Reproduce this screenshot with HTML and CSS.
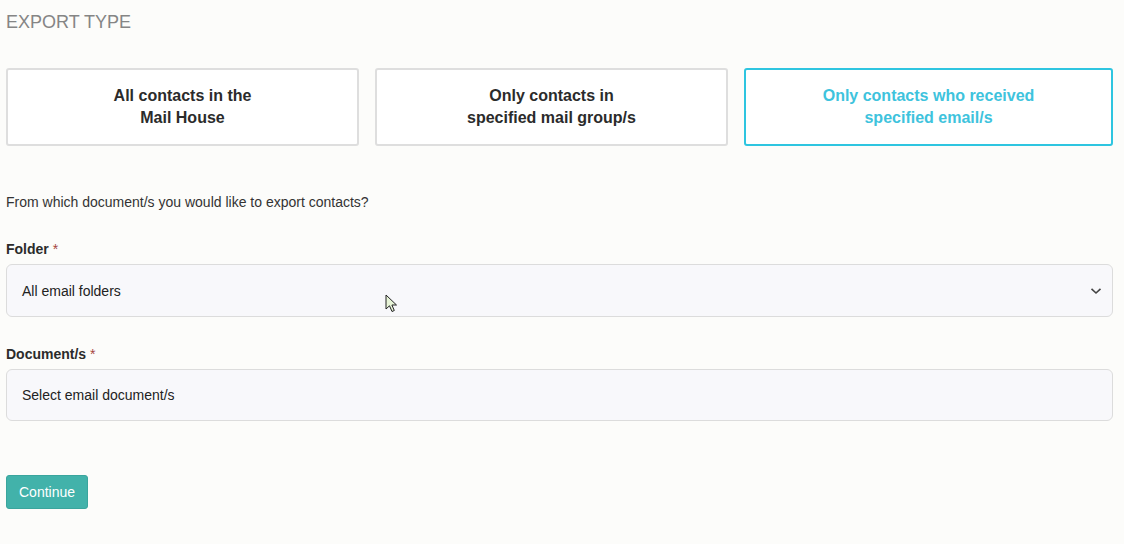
FILE: index.html
```html
<!DOCTYPE html>
<html lang="en">
<head>
    <meta charset="UTF-8">
    <title>Export contacts</title>
    <link rel="stylesheet" href="styles.css">
</head>
<body>
    <div class="page">
        <h2 class="section-title">EXPORT TYPE</h2>

        <div class="type-options">
            <div class="type-card">All contacts in the<br>Mail House</div>
            <div class="type-card">Only contacts in<br>specified mail group/s</div>
            <div class="type-card active">Only contacts who received<br>specified email/s</div>
        </div>

        <p class="question">From which document/s you would like to export contacts?</p>

        <div class="field">
            <label class="field-label">Folder <span class="req">*</span></label>
            <div class="select-box">
                <span>All email folders</span>
                <svg class="chevron" width="12" height="8" viewBox="0 0 12 8">
                    <path d="M1.5 1.8 L6 6 L10.5 1.8" fill="none" stroke="#444" stroke-width="1.6"/>
                </svg>
            </div>
        </div>

        <div class="field">
            <label class="field-label">Document/s <span class="req">*</span></label>
            <div class="select-box">
                <span>Select email document/s</span>
            </div>
        </div>

        <button class="btn-continue">Continue</button>
    </div>

    <!-- mouse pointer seen in the capture -->
    <svg class="cursor" width="14" height="20" viewBox="0 0 14 20">
        <path d="M1 1 L1 15 L4.5 11.8 L7 17.5 L9.3 16.5 L6.9 11 L11.5 11 Z" fill="#e8f5d8" stroke="#222" stroke-width="1"/>
    </svg>
</body>
</html>
```

FILE: styles.css
```css
body {
    margin: 0;
    background-color: #fcfcfa;
    font-family: 'Liberation Sans', Arial, sans-serif;
    color: #333;
}

.page {
    padding: 12px 11px 0 6px;
    display: flex;
    flex-direction: column;
}

.section-title {
    margin: 0;
    font-size: 18px;
    font-weight: 400;
    color: #858585;
    line-height: 20px;
}

.type-options {
    display: grid;
    grid-template-columns: 353px 353px 1fr;
    gap: 16px;
    margin-top: 36px;
}

.type-card {
    height: 78px;
    box-sizing: border-box;
    border: 2px solid #dedede;
    border-radius: 3px;
    background-color: #fff;
    display: flex;
    align-items: center;
    justify-content: center;
    text-align: center;
    font-size: 16px;
    font-weight: 700;
    line-height: 22px;
    color: #2b2b2b;
}

.type-card.active {
    border-color: #2ec5e0;
    color: #3ec3dd;
}

.question {
    margin: 47px 0 0;
    font-size: 14px;
    line-height: 18px;
    color: #333;
}

.field {
    display: flex;
    flex-direction: column;
}

.field-label {
    margin-top: 30px;
    margin-bottom: 7px;
    font-size: 14px;
    font-weight: 700;
    line-height: 16px;
    color: #2b2b2b;
}

.req {
    color: #a5463f;
    font-weight: 400;
}

.select-box {
    height: 53px;
    box-sizing: border-box;
    border: 1px solid #dcdcdc;
    border-radius: 6px;
    background-color: #f8f8fb;
    padding: 0 10px 0 15px;
    display: flex;
    align-items: center;
    justify-content: space-between;
    font-size: 14px;
    color: #222;
}

.field + .field .field-label {
    margin-top: 29px;
}

.field + .field .select-box {
    height: 52px;
}

.btn-continue {
    align-self: flex-start;
    margin-top: 54px;
    padding: 0 12px;
    height: 34px;
    border: 1px solid #3aa59d;
    border-radius: 3px;
    background-color: #42b2aa;
    color: #fff;
    font-family: 'Liberation Sans', Arial, sans-serif;
    font-size: 14px;
}

.cursor {
    position: absolute;
    left: 385px;
    top: 294px;
}
```
